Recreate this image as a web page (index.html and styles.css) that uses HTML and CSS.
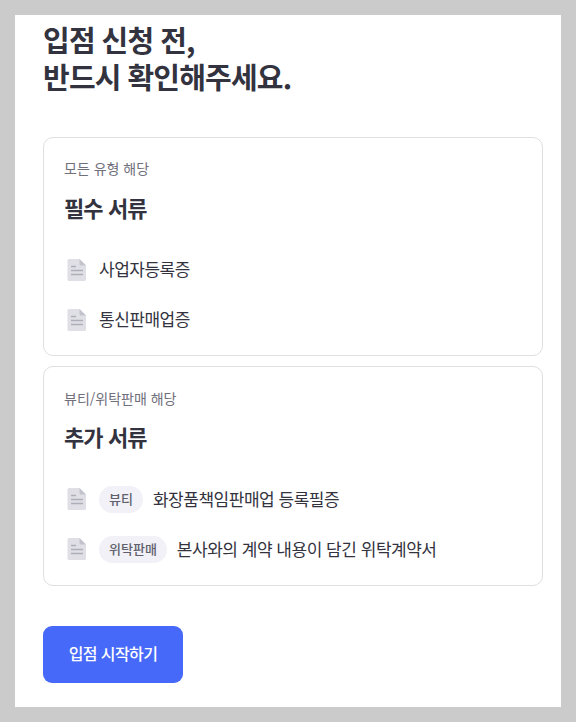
FILE: index.html
```
<!DOCTYPE html>
<html lang="ko">
<head>
    <meta charset="UTF-8">
    <meta name="viewport" content="width=device-width, initial-scale=1.0">
    <title>입점 신청</title>
    <link rel="stylesheet" href="styles.css">
</head>
<body>

<svg class="symbols" width="0" height="0">
    <symbol id="doc" viewBox="0 0 20 24">
        <path d="M2 1H12.500L19 7.500v14a1.500 1.500 0 0 1-1.500 1.500H2A1.500 1.500 0 0 1 .5 21.500V2.500A1.500 1.500 0 0 1 2 1z" fill="#dfdfe5"/>
        <path d="M12.500 1L19 7.500h-5a1.500 1.500 0 0 1-1.500-1.500z" fill="#c3c3cd"/>
        <path d="M4 8.500h5M4 12.500h12M4 16.500h12" stroke="#aeaebb" stroke-width="1.300" fill="none"/>
    </symbol>
</svg>

<main>
    <h1>입점 신청 전,<br>반드시 확인해주세요.</h1>

    <section class="card">
        <p class="target">모든 유형 해당</p>
        <h2>필수 서류</h2>
        <ul>
            <li><svg class="icon"><use href="#doc"/></svg><span class="name">사업자등록증</span></li>
            <li><svg class="icon"><use href="#doc"/></svg><span class="name">통신판매업증</span></li>
        </ul>
    </section>

    <section class="card extra">
        <p class="target">뷰티/위탁판매 해당</p>
        <h2>추가 서류</h2>
        <ul>
            <li><svg class="icon"><use href="#doc"/></svg><span class="tag">뷰티</span><span class="name">화장품책임판매업 등록필증</span></li>
            <li><svg class="icon"><use href="#doc"/></svg><span class="tag">위탁판매</span><span class="name">본사와의 계약 내용이 담긴 위탁계약서</span></li>
        </ul>
    </section>

    <button class="start">입점 시작하기</button>
</main>

</body>
</html>
```
FILE: styles.css
```
* {
    box-sizing: border-box;
    margin: 0;
    padding: 0;
}
body {
    font-family: "Noto Sans CJK KR", sans-serif;
    background: #cbcbcb;
    color: #333340;
    padding: 15px;
}
.symbols {
    position: absolute;
}
main {
    height: 692px;
    padding: 6px 18px 0 28px;
    background: #fff;
}
h1 {
    margin-bottom: 42px;
    font-size: 29px;
    line-height: 37px;
    font-weight: 700;
    letter-spacing: -0.8px;
    word-spacing: -0.5px;
}
.card {
    height: 219px;
    margin-bottom: 10px;
    padding: 19px 20px;
    border: 1px solid #dfdfe2;
    border-radius: 10px;
}
.extra {
    height: 220px;
    padding-top: 20px;
}
.target {
    font-size: 14px;
    line-height: 22px;
    color: #70707c;
}
h2 {
    margin-top: 12px;
    font-size: 22px;
    line-height: 32px;
    font-weight: 700;
    letter-spacing: -0.9px;
}
.extra h2 {
    margin-top: 11px;
}
ul {
    margin-top: 33px;
    list-style: none;
}
li {
    display: flex;
    align-items: center;
    height: 28px;
    margin-bottom: 22px;
}
.icon {
    width: 20px;
    height: 24px;
    margin: 0 12px 0 3px;
}
.name {
    margin-top: -2px;
    font-size: 17px;
    line-height: 26px;
    font-weight: 400;
    letter-spacing: -0.5px;
}
.extra .name {
    margin-top: 0;
    letter-spacing: -0.48px;
}
.tag {
    height: 27px;
    margin-right: 10px;
    padding: 0 10px;
    border-radius: 14px;
    background: #f1f1f7;
    color: #60606c;
    font-size: 13px;
    line-height: 26px;
    font-weight: 500;
}
.start {
    display: block;
    width: 140px;
    height: 57px;
    margin-top: 40px;
    padding-bottom: 3px;
    border: none;
    border-radius: 9px;
    background: #4769f9;
    color: #fff;
    font-family: inherit;
    font-size: 16px;
    font-weight: 500;
    letter-spacing: -0.6px;
    cursor: pointer;
}
```
